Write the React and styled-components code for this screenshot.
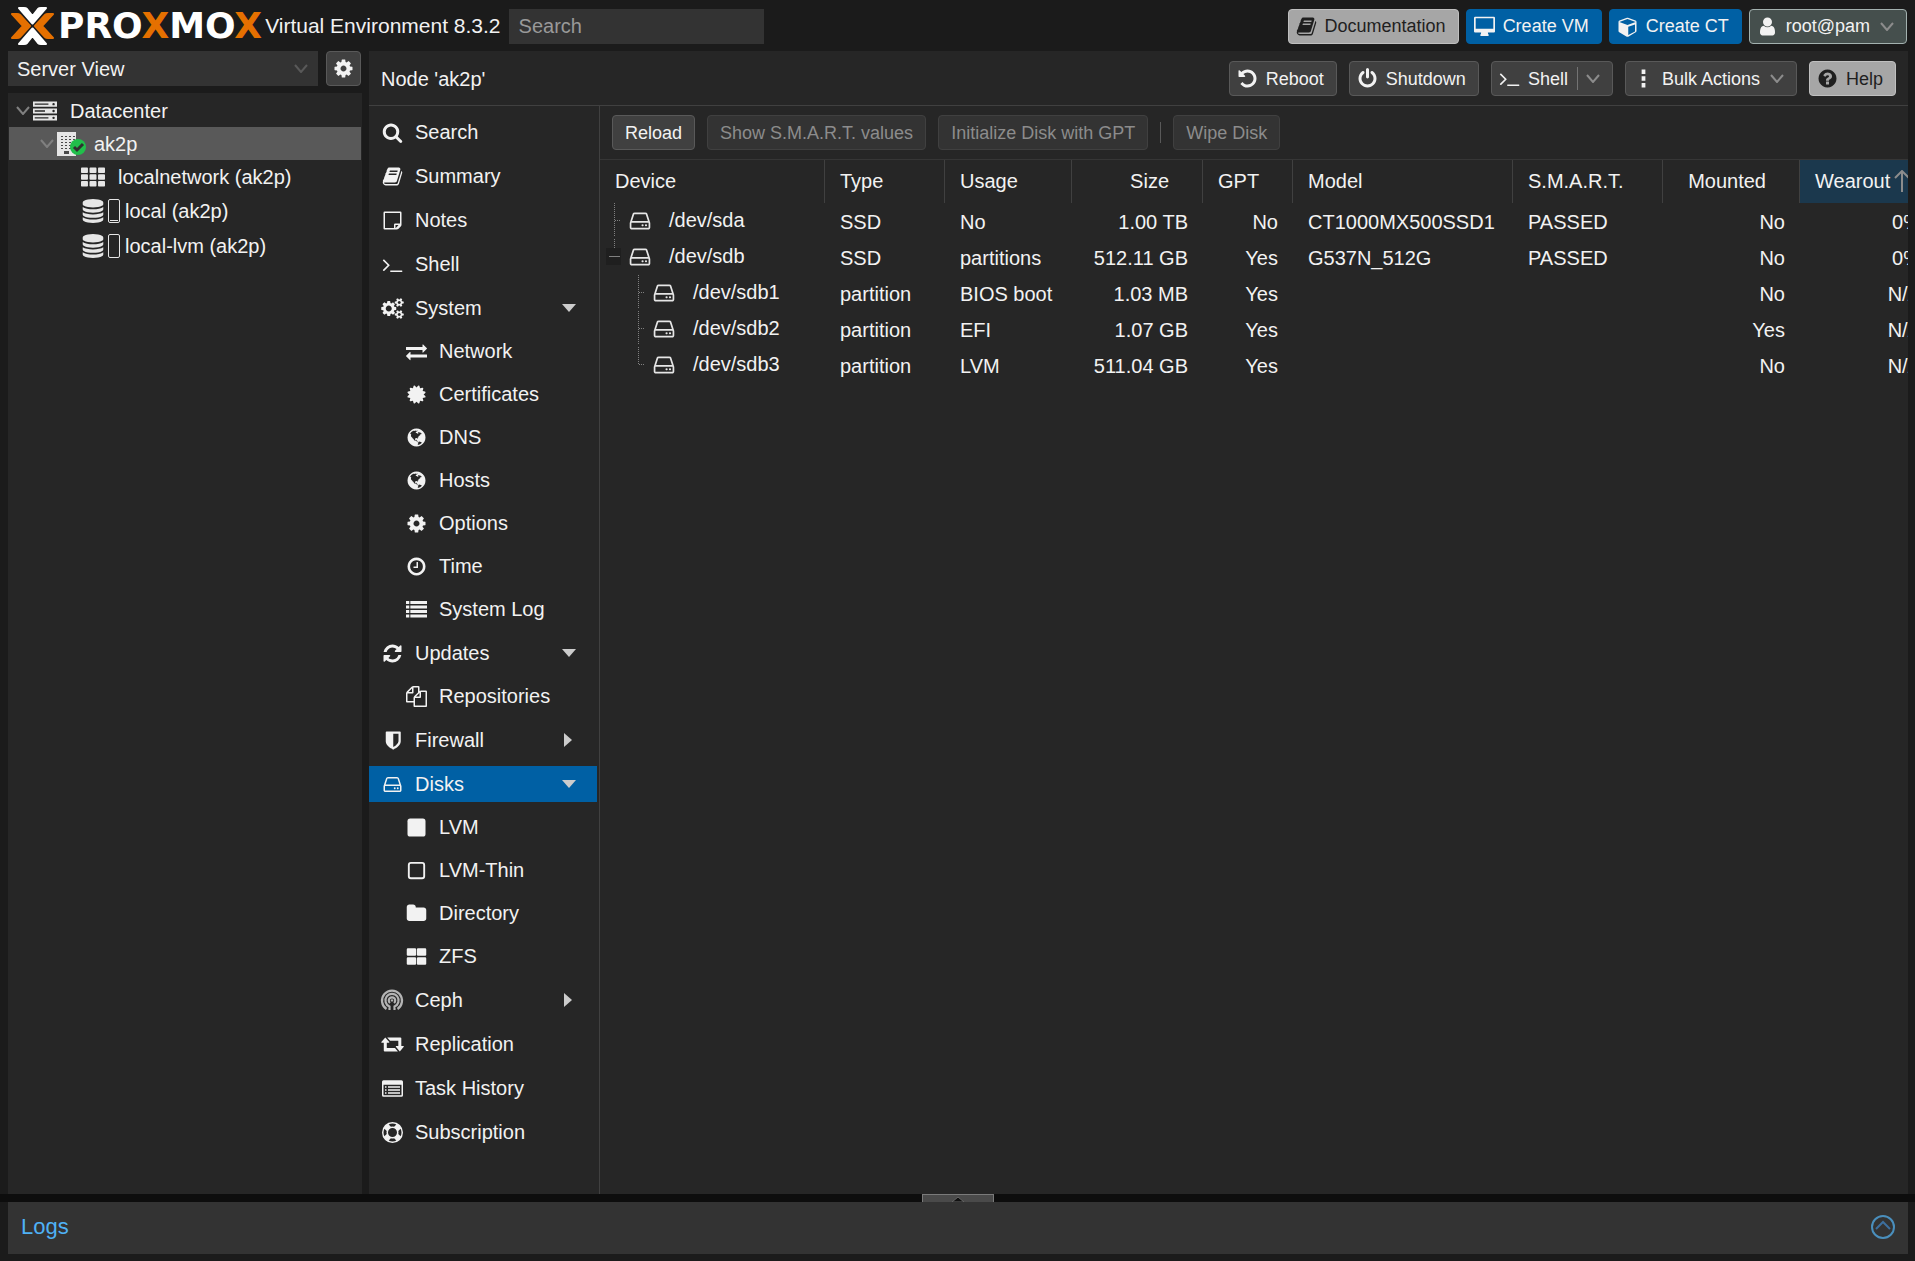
import React, { useState } from "react";
import styled, { createGlobalStyle } from "styled-components";

const GlobalStyle = createGlobalStyle`
  :root {
    --page: #1b1b1b;
    --panel: #262626;
    --field: #333333;
    --line: #404040;
    --text: #f2f2f2;
    --primary: #0060a4;
  }
  * {
    box-sizing: border-box;
  }
  body {
    margin: 0;
    background: var(--page);
    color: var(--text);
    font-family: "Liberation Sans", Arial, sans-serif;
    font-size: 20px;
    line-height: 24px;
  }
  button, input, select {
    font-family: inherit;
  }
`;

/* ---------- icons ---------- */

const paths = {
  search: "M1216 832q0-185-131.5-316.5t-316.5-131.5-316.5 131.5-131.5 316.5 131.5 316.5 316.5 131.5 316.5-131.5 131.5-316.5zm512 832q0 52-38 90t-90 38q-54 0-90-38l-343-342q-179 124-399 124-143 0-273.5-55.5t-225-150-150-225-55.5-273.5 55.5-273.5 150-225 225-150 273.5-55.5 273.5 55.5 225 150 150 225 55.5 273.5q0 220-124 399l343 343q37 37 37 90z",
  book: "M1703 478q40 57 18 129l-275 906q-19 64-76.5 107.5t-122.5 43.5h-923q-77 0-148.5-53.5t-99.5-131.5q-24-67-2-127 0-4 3-27t4-37q1-8-3-21.5t-3-19.5q2-11 8-21t16.5-23.5 16.5-23.5q23-38 45-91.5t30-91.5q3-10 .5-30t-.5-28q3-11 17-28t17-23q21-36 42-92t25-90q1-9-2.5-32t.5-28q4-13 22-30.5t22-22.5q19-26 42.5-84.5t27.5-96.5q1-8-3-25.5t-2-26.5q2-8 9-18t18-23 17-21q8-12 16.5-30.5t15-35 16-36 19.5-32 26.5-23.5 36-11.5 47.5 5.5l-1 3q38-9 51-9h761q74 0 114 56t18 130l-274 906q-36 119-71.5 153.5t-128.5 34.5h-869q-27 0-38 15-11 16-1 43 24 70 144 70h923q29 0 56-15.5t35-41.5l300-987q7-22 5-57 38 15 59 43zm-1064 2q-4 13 2 22.5t20 9.5h608q13 0 25.5-9.5t16.5-22.5l21-64q4-13-2-22.5t-20-9.5h-608q-13 0-25.5 9.5t-16.5 22.5zm-83 256q-4 13 2 22.5t20 9.5h608q13 0 25.5-9.5t16.5-22.5l21-64q4-13-2-22.5t-20-9.5h-608q-13 0-25.5 9.5t-16.5 22.5z",
  note: "M224 128h1344q96 0 96 96v1024q0 90-68 164l-184 184q-74 68-164 68h-1024q-96 0-96-96v-1344q0-96 96-96zM256 256v1280h768v-288q0-96 96-96h416v-896zM1152 1280v248q29-10 41-22l185-185q12-12 22-41z",
  terminal: "M649 983l-466 466q-10 10-23 10t-23-10l-50-50q-10-10-10-23t10-23l393-393-393-393q-10-10-10-23t10-23l50-50q10-10 23-10t23 10l466 466q10 10 10 23t-10 23zm1079 457v64q0 14-9 23t-23 9h-960q-14 0-23-9t-9-23v-64q0-14 9-23t23-9h960q14 0 23 9t9 23z",
  cogs: "M832 896q0-106-75-181t-181-75-181 75-75 181 75 181 181 75 181-75 75-181zm768 512q0-52-38-90t-90-38-90 38-38 90q0 53 37.5 90.5t90.5 37.5 90.5-37.5 37.5-90.5zm0-1024q0-52-38-90t-90-38-90 38-38 90q0 53 37.5 90.5t90.5 37.5 90.5-37.5 37.5-90.5zm-384 421v185q0 10-7 19.5t-16 10.5l-155 24q-11 35-32 76 34 48 90 115 7 11 7 20 0 12-7 19-23 30-82.5 89.5t-78.5 59.5q-11 0-21-7l-115-90q-37 19-77 31-11 108-23 155-7 24-30 24h-186q-11 0-20-7.5t-10-17.5l-23-153q-34-10-75-31l-118 89q-7 7-20 7-11 0-21-8-144-133-144-160 0-9 7-19 10-14 41-53t47-61q-23-44-35-82l-152-24q-10-1-17-9.5t-7-19.5v-185q0-10 7-19.5t16-10.5l155-24q11-35 32-76-34-48-90-115-7-11-7-20 0-12 7-20 22-30 82-89t79-59q11 0 21 7l115 90q34-18 77-32 11-108 23-154 7-24 30-24h186q11 0 20 7.5t10 17.5l23 153q34 10 75 31l118-89q8-7 20-7 11 0 21 8 144 133 144 160 0 8-7 19-12 16-42 54t-45 60q23 48 34 82l152 23q10 2 17 10.5t7 19.5zm640 533v140q0 16-149 31-12 27-30 52 51 113 51 138 0 4-4 7-122 71-124 71-8 0-46-47t-52-68q-20 2-30 2t-30-2q-14 21-52 68t-46 47q-2 0-124-71-4-3-4-7 0-25 51-138-18-25-30-52-149-15-149-31v-140q0-16 149-31 13-29 30-52-51-113-51-138 0-4 4-7 4-2 35-20t59-34 30-16q8 0 46 46.5t52 67.5q20-2 30-2t30 2q51-71 92-112l6-2q4 0 124 70 4 3 4 7 0 25-51 138 17 23 30 52 149 15 149 31zm0-1024v140q0 16-149 31-12 27-30 52 51 113 51 138 0 4-4 7-122 71-124 71-8 0-46-47t-52-68q-20 2-30 2t-30-2q-14 21-52 68t-46 47q-2 0-124-71-4-3-4-7 0-25 51-138-18-25-30-52-149-15-149-31v-140q0-16 149-31 13-29 30-52-51-113-51-138 0-4 4-7 4-2 35-20t59-34 30-16q8 0 46 46.5t52 67.5q20-2 30-2t30 2q51-71 92-112l6-2q4 0 124 70 4 3 4 7 0 25-51 138 17 23 30 52 149 15 149 31z",
  cog: "M1152 896q0-106-75-181t-181-75-181 75-75 181 75 181 181 75 181-75 75-181zm512-109v222q0 12-8 23t-20 13l-185 28q-19 54-39 91 35 50 107 138 10 12 10 25t-9 23q-27 37-99 108t-94 71q-12 0-26-9l-138-108q-44 23-91 38-16 136-29 186-7 28-36 28h-222q-14 0-24.5-8.5t-11.5-21.5l-28-184q-49-16-90-37l-141 107q-10 9-25 9-14 0-25-11-126-114-165-168-7-10-7-23 0-12 8-23 15-21 51-66.5t54-70.5q-27-50-41-99l-183-27q-13-2-21-12.5t-8-23.5v-222q0-12 8-23t19-13l186-28q14-46 39-92-40-57-107-138-10-12-10-24 0-10 9-23 26-36 98.5-107.5t94.5-71.5q13 0 26 10l138 107q44-23 91-38 16-136 29-186 7-28 36-28h222q14 0 24.5 8.5t11.5 21.5l28 184q49 16 90 37l142-107q9-9 24-9 13 0 25 10 129 119 165 170 7 8 7 22 0 12-8 23-15 21-51 66.5t-54 70.5q26 50 41 98l183 28q13 2 21 12.5t8 23.5z",
  exchange: "M1792 1184v192q0 13-9.5 22.5t-22.5 9.5h-1376v192q0 13-9.5 22.5t-22.5 9.5q-12 0-24-10l-319-320q-9-9-9-22 0-14 9-23l320-320q9-9 23-9 13 0 22.5 9.5t9.5 22.5v192h1376q13 0 22.5 9.5t9.5 22.5zm0-544q0 14-9 23l-320 320q-9 9-23 9-13 0-22.5-9.5t-9.5-22.5v-192h-1376q-13 0-22.5-9.5t-9.5-22.5v-192q0-13 9.5-22.5t22.5-9.5h1376v-192q0-14 9-23t23-9q12 0 24 10l319 319q9 9 9 23z",
  certificate: "M1504 896l138 135q30 28 20 70-12 41-52 51l-188 48 53 186q12 41-19 70-29 31-70 19l-186-53-48 188q-10 40-51 52-12 2-19 2-31 0-51-22l-135-138-135 138q-28 30-70 20-41-11-51-52l-48-188-186 53q-41 12-70-19-31-29-19-70l53-186-188-48q-40-10-52-51-10-42 20-70l138-135-138-135q-30-28-20-70 12-41 52-51l188-48-53-186q-12-41 19-70 29-31 70-19l186 53 48-188q10-41 51-51 41-12 70 19l135 139 135-139q29-30 70-19 41 10 51 51l48 188 186-53q41-12 70 19 31 29 19 70l-53 186 188 48q40 10 52 51 10 42-20 70z",
  globe: "M896 128q209 0 385.5 103t279.5 279.5 103 385.5-103 385.5-279.5 279.5-385.5 103-385.5-103-279.5-279.5-103-385.5 103-385.5 279.5-279.5 385.5-103zm274 521q-2 1-9.5 9.5t-13.5 9.5q2 0 4.5-5t5-11 3.5-7q6-7 22-15 14-6 52-12 34-8 51 11-2-2 9.5-13t14.5-12q3-2 15-4.5t15-7.5l2-22q-12 1-17.5-7t-6.5-21q0 2-6 8 0-7-4.5-8t-11.5 1-9 1q-10-3-15-7.5t-8-16.5-4-15q-2-5-9.5-11t-9.5-10q-1-2-2.5-5.5t-3-6.5-4-5.5-5.5-2.5-7 5-7.5 10-4.5 5q-3-2-6-1.5t-4.5 1-4.5 3-5 3.5q-3 2-8.5 3t-8.5 2q15-5-1-11-10-4-16-3 9-4 7.5-12t-8.5-14h5q-1-4-8.5-8.5t-17.5-8.5-13-6q-8-5-34-9.5t-33-.5q-5 6-4.5 10.5t4 14 3.5 12.5q1 6-5.5 13t-6.5 12q0 7 14 15.500t10 21.500q-3 8-16 16t-16 12q-5 8-1.5 18.5t10.5 16.5q2 2 1.5 4t-3.5 4.5-5.5 4-6.5 3.5l-3 2q-11 5-20.5-6t-13.5-26q-7-25-16-30-23-8-29 1-5-13-41-26-25-9-58-4 6-1 0-15-7-15-19-12 3-6 4-17.5t1-13.5q3-13 12-23 1-1 7-8.5t9.5-13.5.5-6q35 4 50-11 5-5 11.5-17t10.5-17q9-6 14-5.5t14.5 5.5 14.5 5q14 1 15.5-11t-7.5-20q12 1 3-17-4-7-8-9-12-4-27 5-8 4 2 8-1-1-9.5 10.5t-16.5 17.5-16-5q-1-1-5.5-13.5t-9.5-13.5q-8 0-16 15 3-8-11-15t-24-8q19-12-8-27-7-4-20.5-5t-19.5 4q-5 7-5.5 11.5t5 8 10.5 5.5 11.5 4 8.5 3q14 10 8 14-2 1-8.5 3.5t-11.5 4.5-6 4q-3 4 0 14t-2 14q-5-5-9-17.5t-7-16.5q7 9-25 6l-10-1q-4 0-16 2t-20.5 1-13.5-8q-4-8 0-20 1-4 4-2-4-3-11-9.5t-10-8.5q-46 15-94 41 6 1 12-1 5-2 13-6.5t10-5.5q34-14 42-7l5-5q14 16 20 25-7-4-30-1-20 6-22 12 7 12 5 18-4-3-11.5-10t-14.5-11-15-5q-16 0-22 1-146 80-235 222 7 7 12 8 4 1 5 9t2.5 11 11.5-3q9 8 3 19 1-1 44 27 19 17 21 21 3 11-10 18-1-2-9-9t-9-4q-3 5 .5 18.5t10.5 12.5q-7 0-9.5 16t-2.5 35.5-1 23.5l2 1q-3 12 5.5 34.5t21.5 19.5q-13 3 20 43 6 8 8 9 3 2 12 7.5t15 10 10 10.5q4 5 10 22.5t14 23.5q-2 6 9.5 20t10.5 23q-1 0-2.5 1t-2.5 1q3 7 15.5 14t15.5 13q1 3 2 10t3 11 8 2q2-20-24-62-15-25-17-29-3-5-5.5-15.5t-4.5-14.5q2 0 6 1.5t8.5 3.5 7.5 4 2 3q-3 7 2 17.5t12 18.5 17 19 12 13q6 6 14 19.5t0 13.5q9 0 20 10.5t17 19.5q5 8 8 26t5 24q2 7 8.5 13.5t12.5 9.5l16 8 13 7q5 2 18.5 10.5t21.5 11.5q10 4 16 4t14.5-2.5 13.5-3.5q15-2 29 15t21 21q36 19 55 11-2 1 .5 7.5t8 15.5 9 14.5 5.5 8.5q5 6 18 15t18 15q6-4 7-9-3 8 7 20t18 10q14-3 14-32-31 15-49-18 0-1-2.5-5.5t-4-8.5-2.5-8.5 0-7.5 5-3q9 0 10-3.5t-2-12.5-4-13q-1-8-11-20t-12-15q-5 9-16 8t-16-9q0 1-1.5 5.5t-1.5 6.5q-13 0-15-1 1-3 2.5-17.5t3.5-22.5q1-4 5.5-12t7.5-14.5 4-12.5-4.5-9.5-17.5-2.5q-19 1-26 20-1 3-3 10.5t-5 11.5-9 7q-7 3-24 2t-24-5q-13-8-22.5-29t-9.5-37q0-10 2.5-26.5t3-25-5.5-24.5q3-2 9-9.5t10-10.5q2-1 4.5-1.5t4.5 0 4-1.5 3-6q-1-1-4-3-3-3-4-3 7 3 28.5-1.5t27.5 1.5q15 11 22-2 0-1-2.5-9.5t-.5-13.5q5 27 29 9 3 3 15.5 5t17.5 5q3 2 7 5.5t5.5 4.5 5-.5 8.5-6.5q10 14 12 24 11 40 19 44 7 3 11 2t4.5-9.5 0-14-1.5-12.5l-1-8v-18l-1-8q-15-3-18.5-12t1.5-18.5 15-18.5q1-1 8-3.5t15.5-6.5 12.5-8q21-19 15-35 7 0 11-9-1 0-5-3t-7.5-5-4.5-2q9-5 2-16 5-3 7.5-11t7.5-10q9 12 21 2 8-8 1-16 5-7 20.5-10.5t18.5-9.5q7 2 8-2t1-12 3-12q4-5 15-9t13-5l17-11q3-4 0-4 18 2 31-11 10-11-6-20 3-6-3-9.5t-15-5.5q3-1 11.5-.5t10.5-1.5q15-10-7-16-17-5-43 12zm-163 877q206-36 351-189-3-3-12.5-4.5t-12.5-3.5q-18-7-24-8 1-7-2.5-13t-8-9-12.5-8-11-7q-2-2-7-6t-7-5.5-7.5-4.5-8.5-2-10 1l-3 1q-3 1-5.5 2.5t-5.5 3-4 3 0 2.5q-21-17-36-22-5-1-11-5.5t-10.5-7-10-1.5-11.5 7q-5 5-6 15t-2 13q-7-5 0-17.5t2-18.5q-3-6-10.5-4.5t-12 4.5-11.5 8.5-9 6.5-8.5 5.5-8.5 7.5q-3 4-6 12t-5 11q-2-4-11.5-6.5t-9.5-5.5q2 10 4 35t5 38q7 31-12 48-27 25-29 40-4 22 12 26 0 7-8 20.5t-7 21.5q0 6 2 16z",
  clock: "M1024 544v448q0 14-9 23t-23 9h-320q-14 0-23-9t-9-23v-64q0-14 9-23t23-9h224v-352q0-14 9-23t23-9h64q14 0 23 9t9 23zm416 352q0-148-73-273t-198-198-273-73-273 73-198 198-73 273 73 273 198 198 273 73 273-73 198-198 73-273zm224 0q0 209-103 385.5t-279.5 279.5-385.5 103-385.5-103-279.5-279.5-103-385.5 103-385.5 279.5-279.5 385.5-103 385.5 103 279.5 279.5 103 385.5z",
  list: "M0 160h280v256h-280zM370 160h1422v256h-1422zM0 544h280v256h-280zM370 544h1422v256h-1422zM0 928h280v256h-280zM370 928h1422v256h-1422zM0 1312h280v256h-280zM370 1312h1422v256h-1422z",
  refresh: "M1639 1056q0 5-1 7-64 268-268 434.5t-478 166.5q-146 0-282.5-55t-243.5-157l-129 129q-19 19-45 19t-45-19-19-45v-448q0-26 19-45t45-19h448q26 0 45 19t19 45-19 45l-137 137q71 66 161 102t187 36q134 0 250-65t186-179q11-17 53-117 8-23 30-23h192q13 0 22.5 9.5t9.5 22.5zm25-800v448q0 26-19 45t-45 19h-448q-26 0-45-19t-19-45 19-45l138-138q-148-137-349-137-134 0-250 65t-186 179q-11 17-53 117-8 23-30 23h-199q-13 0-22.5-9.5t-9.5-22.5v-7q65-268 270-434.5t480-166.5q146 0 284 55.5t245 156.5l130-129q19-19 45-19t45 19 19 45z",
  files: "M1696 384q40 0 68 28t28 68v1216q0 40-28 68t-68 28h-960q-40 0-68-28t-28-68v-288h-544q-40 0-68-28t-28-68v-672q0-40 20-88t48-76l408-408q28-28 76-48t88-20h416q40 0 68 28t28 68v328q68-40 128-40h416zm-544 213l-299 299h299v-299zm-640-384l-299 299h299v-299zm196 647l316-316v-416h-384v416q0 40-28 68t-68 28h-416v640h512v-256q0-40 20-88t48-76zm956 804v-1152h-384v416q0 40-28 68t-68 28h-416v640h896z",
  shield: "M1408 960v-640h-448v1137q119-63 213-137 235-184 235-360zm192-768v768q0 86-33.5 170.5t-83 150-118 127.5-126.5 103-121 77.5-89.5 49.5-42.5 20q-12 6-26 6t-26-6q-16-7-42.5-20t-89.5-49.5-121-77.5-126.5-103-118-127.5-83-150-33.5-170.5v-768q0-26 19-45t45-19h1152q26 0 45 19t19 45z",
  hdd: "M1168 1216q0 33-23.5 56.5t-56.5 23.5-56.5-23.5-23.5-56.5 23.5-56.5 56.5-23.5 56.5 23.5 23.5 56.5zm256 0q0 33-23.5 56.5t-56.5 23.5-56.5-23.5-23.5-56.5 23.5-56.5 56.5-23.5 56.5 23.5 23.5 56.5zm112 160v-320q0-13-9.5-22.5t-22.5-9.5h-1216q-13 0-22.5 9.5t-9.5 22.5v320q0 13 9.5 22.5t22.5 9.5h1216q13 0 22.5-9.5t9.5-22.5zm-1230-480h1180l-157-482q-4-13-16-21.5t-26-8.5h-782q-14 0-26 8.5t-16 21.5zm1358 160v320q0 66-47 113t-113 47h-1216q-66 0-113-47t-47-113v-320q0-25 16-75l197-606q17-53 63-86t101-33h782q55 0 101 33t63 86l197 606q16 50 16 75z",
  square: "M352 128h1088q224 0 224 224v1088q0 224-224 224h-1088q-224 0-224-224v-1088q0-224 224-224z",
  squareOpen: "M416 160h960q256 0 256 256v960q0 256-256 256h-960q-256 0-256-256v-960q0-256 256-256zM416 320q-96 0-96 96v960q0 96 96 96h960q96 0 96-96v-960q0-96-96-96z",
  folder: "M1728 608v704q0 92-66 158t-158 66h-1216q-92 0-158-66t-66-158v-960q0-92 66-158t158-66h320q92 0 158 66t66 158v32h672q92 0 158 66t66 158z",
  thLarge: "M160 192h608q96 0 96 96v448q0 96-96 96h-608q-96 0-96-96v-448q0-96 96-96zM1024 192h608q96 0 96 96v448q0 96-96 96h-608q-96 0-96-96v-448q0-96 96-96zM160 960h608q96 0 96 96v448q0 96-96 96h-608q-96 0-96-96v-448q0-96 96-96zM1024 960h608q96 0 96 96v448q0 96-96 96h-608q-96 0-96-96v-448q0-96 96-96z",
  th: "M60 192h400q60 0 60 60v280q0 60-60 60h-400q-60 0-60-60v-280q0-60 60-60zM696 192h400q60 0 60 60v280q0 60-60 60h-400q-60 0-60-60v-280q0-60 60-60zM1332 192h400q60 0 60 60v280q0 60-60 60h-400q-60 0-60-60v-280q0-60 60-60zM60 696h400q60 0 60 60v280q0 60-60 60h-400q-60 0-60-60v-280q0-60 60-60zM696 696h400q60 0 60 60v280q0 60-60 60h-400q-60 0-60-60v-280q0-60 60-60zM1332 696h400q60 0 60 60v280q0 60-60 60h-400q-60 0-60-60v-280q0-60 60-60zM60 1200h400q60 0 60 60v280q0 60-60 60h-400q-60 0-60-60v-280q0-60 60-60zM696 1200h400q60 0 60 60v280q0 60-60 60h-400q-60 0-60-60v-280q0-60 60-60zM1332 1200h400q60 0 60 60v280q0 60-60 60h-400q-60 0-60-60v-280q0-60 60-60z",
  retweet: "M280 290l340 400q20 60-40 60h-172v448h700l250 290h-1126q-80 0-80-80v-658h-172q-60 0-40-60zM1520 1490l-340-400q-20-60 40-60h172v-448h-700l-250-290h1126q80 0 80 80v658h172q60 0 40 60z",
  listAlt: "M130 192h1532q130 0 130 130v1148q0 130-130 130h-1532q-130 0-130-130v-1148q0-130 130-130zM128 576v864q0 32 32 32h1472q32 0 32-32v-864zM256 704h128v128h-128zM512 704h1024v128h-1024zM256 960h128v128h-128zM512 960h1024v128h-1024zM256 1216h128v128h-128zM512 1216h1024v128h-1024z",
  lifeRing: "M896 0a896 896 0 1 1 0 1792a896 896 0 1 1 0-1792zM896 512a384 384 0 1 0 0 768a384 384 0 1 0 0-768zM566 208l194 194q136-36 272 0l194-194q-330-160-660 0zM566 1584l194-194q136 36 272 0l194 194q-330 160-660 0zM208 566l194 194q-36 136 0 272l-194 194q-160-330 0-660zM1584 566l-194 194q36 136 0 272l194 194q160-330 0-660z",
  database: "M896 768q237 0 443-43t325-127v170q0 69-103 128t-280 93.5-385 34.5-385-34.5-280-93.5-103-128v-170q119 84 325 127t443 43zm0 768q237 0 443-43t325-127v170q0 69-103 128t-280 93.5-385 34.5-385-34.5-280-93.5-103-128v-170q119 84 325 127t443 43zm0-384q237 0 443-43t325-127v170q0 69-103 128t-280 93.5-385 34.5-385-34.5-280-93.5-103-128v-170q119 84 325 127t443 43zm0-1152q208 0 385 34.5t280 93.5 103 128v128q0 69-103 128t-280 93.5-385 34.5-385-34.5-280-93.5-103-128v-128q0-69 103-128t280-93.5 385-34.5z",
  server: "M0 192h1792v384h-1792zM128 336v96h1024v-96zM1536 294a90 90 0 1 0 0 180a90 90 0 1 0 0-180zM0 704h1792v384h-1792zM128 848v96h768v-96zM1536 806a90 90 0 1 0 0 180a90 90 0 1 0 0-180zM0 1216h1792v384h-1792zM128 1360v96h1024v-96zM1536 1318a90 90 0 1 0 0 180a90 90 0 1 0 0-180z",
  undo: "M1664 896q0 156-61 298t-164 245-245 164-298 61q-172 0-327-72.5t-264-204.5q-7-10-6.5-22.5t8.5-20.5l137-138q10-9 25-9 16 2 23 12 73 95 179 147t225 52q104 0 198.5-40.5t163.5-109.5 109.5-163.5 40.5-198.5-40.5-198.5-109.5-163.5-163.5-109.5-198.5-40.5q-98 0-188 35.5t-160 101.5l137 138q31 30 14 69-17 40-59 40h-448q-26 0-45-19t-19-45v-448q0-42 40-59 39-17 69 14l130 129q107-101 244.5-156.5t284.5-55.5q156 0 298 61t245 164 164 245 61 298z",
  power: "M1664 896q0 156-61 298t-164 245-245 164-298 61-298-61-245-164-164-245-61-298q0-182 80.5-343t226.5-270q43-32 95.5-25t83.5 50q32 42 24.5 94.5t-49.5 84.5q-98 74-151.5 181t-53.5 228q0 104 40.5 198.5t109.5 163.5 163.5 109.5 198.5 40.5 198.5-40.5 163.5-109.5 109.5-163.5 40.5-198.5q0-121-53.5-228t-151.5-181q-42-32-49.5-84.5t24.5-94.5q31-43 84-50t95 25q146 109 226.5 270t80.5 343zm-640-768v640q0 52-38 90t-90 38-90-38-38-90v-640q0-52 38-90t90-38 90 38 38 90z",
  help: "M1024 1376v-192q0-14-9-23t-23-9h-192q-14 0-23 9t-9 23v192q0 14 9 23t23 9h192q14 0 23-9t9-23zm256-672q0-88-55.5-163t-138.5-116-170-41q-243 0-371 213-15 24 8 42l132 100q7 6 19 6 16 0 25-12 53-68 86-92 34-24 86-24 48 0 85.5 26t37.5 59q0 38-20 61t-68 45q-63 28-115.5 86.5t-52.5 125.5v36q0 14 9 23t23 9h192q14 0 23-9t9-23q0-19 21.5-49.5t54.5-49.5q32-18 49-28.5t46-35 44.5-48 28-60.5 12.5-81zm384 192q0 209-103 385.5t-279.5 279.5-385.5 103-385.5-103-279.5-279.5-103-385.5 103-385.5 279.5-279.5 385.5-103 385.5 103 279.5 279.5 103 385.5z",
  cube: "M960 1629l576-314v-600l-576 210zM896 764l698-254-698-254-698 254zM1664 512v768q0 72-67 112l-640 370q-61 30-122 0l-640-370q-67-40-67-112v-768q0-84 84-120l640-240q44-16 88 0l640 240q84 36 84 120z",
  desktop: "M96 64h1600q96 0 96 96v1152q0 96-96 96h-512q0 96 64 192 32 64-32 96h-640q-64-32-32-96 64-96 64-192h-512q-96 0-96-96v-1152q0-96 96-96zM144 192v896h1504v-896z",
  user: "M1536 1399q0 109-62.5 187t-150.5 78h-854q-88 0-150.5-78t-62.5-187q0-85 8.5-160.5t31.5-152 58.5-131 94-89 134.5-34.5q131 128 313 128t313-128q76 0 134.5 34.5t94 89 58.5 131 31.5 152 8.5 160.5zm-256-887q0 159-112.5 271.5t-271.5 112.5-271.5-112.5-112.5-271.5 112.5-271.5 271.5-112.5 271.5 112.5 112.5 271.5z",
  dots: "M736 128h320v384h-320zM736 704h320v384h-320zM736 1280h320v384h-320z",
};

const IconSvg = styled.svg`
  width: ${(p) => p.$size}px;
  height: ${(p) => p.$size}px;
  flex: none;
  display: block;
  overflow: visible;
`;

function Icon({ name, size = 21 }) {
  return (
    <IconSvg $size={size} viewBox="0 0 1792 1792" aria-hidden="true">
      <path d={paths[name]} fill="currentColor" fillRule="evenodd" />
    </IconSvg>
  );
}

function CephIcon() {
  return (
    <IconSvg $size={22} viewBox="0 0 22 22" fill="none" stroke="#b4b4b4" strokeWidth="2.200" aria-hidden="true">
      <path d="M5.5 20A10 10 0 1 1 16.5 20" />
      <path d="M8.5 21V17.5A6.6 6.6 0 1 1 13.5 17.5V21" />
      <path d="M9 14A3.2 3.2 0 1 1 13 14" />
      <circle cx="11" cy="11.4" r="1.2" fill="#b4b4b4" stroke="none" />
    </IconSvg>
  );
}

function NodeIcon() {
  const dots = [];
  for (let y = 0; y < 5; y++) {
    for (let x = 0; x < 4; x++) {
      dots.push(<rect key={`${x}-${y}`} x={4 + x * 4} y={4 + y * 3} width="2" height="1" fill="#4a4a4a" />);
    }
  }
  return (
    <IconSvg $size={24} viewBox="0 0 24 24" aria-hidden="true">
      <path d="M0 0h19v24h-19z" fill="#e6e6e6" />
      {dots}
      <path d="M7 19h5v3h-5z" fill="#4a4a4a" />
      <circle cx="21" cy="15" r="8" fill="#21bf4b" />
      <path d="M17 15l3 3 6-6" fill="none" stroke="#303030" strokeWidth="3" />
    </IconSvg>
  );
}

const ChevronSvg = styled.svg`
  width: 14px;
  height: 9px;
  flex: none;
  color: ${(p) => p.$color || "#8c8c8c"};
`;

function Chevron({ color }) {
  return (
    <ChevronSvg $color={color} viewBox="0 0 14 9" fill="none" aria-hidden="true">
      <path d="M1 1L7 8L13 1" stroke="currentColor" strokeWidth="2" />
    </ChevronSvg>
  );
}

const LogoMark = styled.svg`
  width: 43px;
  height: 38px;
  flex: none;
`;

function Logo() {
  return (
    <LogoMark viewBox="0 0 43 38" strokeLinejoin="round" strokeWidth="2" aria-hidden="true">
      <path d="M1 7H6Q8 7 9 8L19 19L9 30Q8 31 6 31H1L12 19Z" fill="#e57000" stroke="#e57000" />
      <path d="M42 7H37Q35 7 34 8L24 19L34 30Q35 31 37 31H42L31 19Z" fill="#e57000" stroke="#e57000" />
      <path d="M8 1H13Q15 1 16 2L21.500 9L27 2Q28 1 30 1H35L21.500 16.500Z" fill="#fff" stroke="#fff" />
      <path d="M8 37H13Q15 37 16 36L21.500 29L27 36Q28 37 30 37H35L21.500 21.500Z" fill="#fff" stroke="#fff" />
    </LogoMark>
  );
}

/* ---------- shared controls ---------- */

const variants = {
  normal: "background: #404040; border-color: #595959; color: #f2f2f2;",
  light: "background: #a6a6a6; border-color: #bfbfbf; color: #1f1f1f;",
  primary: "background: #0060a4; border-color: #0060a4; color: #f2f2f2;",
  user: "background: #454f4d; border-color: #a3b1af; color: #f2f2f2;",
};

const Button = styled.button`
  height: 35px;
  padding: 0 12px;
  display: flex;
  align-items: center;
  flex: none;
  border: 1px solid;
  border-radius: 4px;
  font-size: 18px;
  line-height: 22px;
  white-space: nowrap;
  ${(p) => variants[p.$variant || "normal"]}
  &:disabled {
    background: #333333;
    border-color: #404040;
    color: #8c8c8c;
  }
`;
const IconButton = styled(Button)`
  padding-left: 6px;
  gap: 6px;
`;
const ButtonIcon = styled.span`
  width: 24px;
  display: flex;
  justify-content: center;
`;
const ButtonArrow = styled.span`
  height: 23px;
  margin-left: ${(p) => (p.$split ? "3px" : "4px")};
  padding-left: ${(p) => (p.$split ? "8px" : "0")};
  border-left: ${(p) => (p.$split ? "1px solid #737373" : "none")};
  display: flex;
  align-items: center;
`;

function ActionButton({ icon, variant, menu, split, children }) {
  return (
    <IconButton type="button" $variant={variant}>
      <ButtonIcon><Icon name={icon} /></ButtonIcon>
      {children}
      {(menu || split) && <ButtonArrow $split={split}><Chevron /></ButtonArrow>}
    </IconButton>
  );
}

/* ---------- page ---------- */

const Page = styled.div`
  min-height: 100vh;
  display: flex;
  flex-direction: column;
`;
const Header = styled.header`
  padding: 7px 8px 6px 11px;
  display: flex;
  align-items: center;
`;
const Brand = styled.a`
  display: flex;
  align-items: center;
  gap: 4px;
  color: #ffffff;
  text-decoration: none;
`;
const BrandName = styled.span`
  font-family: "DejaVu Sans", sans-serif;
  font-size: 36px;
  font-weight: 700;
  line-height: 38px;
  i {
    font-style: normal;
    color: #e57000;
  }
`;
const Product = styled.h1`
  margin: 0 8px 0 3px;
  font-size: 21px;
  font-weight: 400;
  line-height: 24px;
  white-space: nowrap;
`;
const SearchBox = styled.input`
  width: 255px;
  height: 35px;
  padding: 0 10px;
  border: 0;
  background: var(--field);
  color: var(--text);
  font-size: 20px;
  &::placeholder {
    color: #999999;
    opacity: 1;
  }
`;
const HeaderActions = styled.div`
  margin-left: auto;
  display: flex;
  gap: 7px;
`;
const Workspace = styled.div`
  flex: 1;
  padding: 0 7px 0 8px;
  display: flex;
  gap: 7px;
`;

const Sidebar = styled.aside`
  width: 354px;
  flex: none;
  display: flex;
  flex-direction: column;
  gap: 7px;
`;
const ViewBar = styled.div`
  padding-right: 1px;
  display: flex;
  gap: 8px;
`;
const ViewField = styled.div`
  flex: 1;
  padding-right: 10px;
  display: flex;
  align-items: center;
  background: var(--field);
`;
const ViewSelect = styled.select`
  flex: 1;
  height: 35px;
  padding: 0 9px;
  border: 0;
  appearance: none;
  background: transparent;
  color: var(--text);
  font-size: 20px;
`;
const GearButton = styled(Button)`
  width: 35px;
  padding: 0;
  justify-content: center;
`;
const Tree = styled.ul`
  flex: 1;
  margin: 0;
  padding: 1px;
  list-style: none;
  background: var(--panel);
`;
const TreeRow = styled.li`
  height: ${(p) => (p.$storage ? "35px" : "33px")};
  padding-left: ${(p) => 7 + p.$level * 24}px;
  display: flex;
  align-items: center;
  background: ${(p) => (p.$selected ? "#595959" : "transparent")};
  color: #e6e6e6;
`;
const TreeArrow = styled.span`
  width: 17px;
  display: flex;
`;
const TreeLabel = styled.span`
  margin-left: ${(p) => (p.$storage ? "5px" : "13px")};
  color: var(--text);
`;
const UsageBar = styled.span`
  width: 12px;
  height: 24px;
  margin-left: 3px;
  padding: 1px;
  border: 1px solid #e6e6e6;
  border-radius: 2px;
  display: flex;
  align-items: flex-end;
`;
const UsageFill = styled.span`
  width: 100%;
  background: #e6e6e6;
`;

const tree = [
  { level: 0, icon: "server", label: "Datacenter", open: true },
  { level: 1, icon: "node", label: "ak2p", open: true, selected: true },
  { level: 2, icon: "th", label: "localnetwork (ak2p)" },
  { level: 2, icon: "database", label: "local (ak2p)", storage: true, usage: 5 },
  { level: 2, icon: "database", label: "local-lvm (ak2p)", storage: true, usage: 0 },
];

function ServerTree() {
  return (
    <Sidebar>
      <ViewBar>
        <ViewField>
          <ViewSelect aria-label="View">
            <option>Server View</option>
          </ViewSelect>
          <Chevron color="#595959" />
        </ViewField>
        <GearButton type="button" aria-label="Tree settings"><Icon name="cog" /></GearButton>
      </ViewBar>
      <Tree>
        {tree.map((n) => (
          <TreeRow key={n.label} $level={n.level} $selected={n.selected} $storage={n.storage}>
            <TreeArrow>{n.open && <Chevron color="#808080" />}</TreeArrow>
            {n.icon === "node" ? <NodeIcon /> : <Icon name={n.icon} size={24} />}
            {n.storage && (
              <UsageBar>
                <UsageFill style={{ height: `${n.usage}%` }} />
              </UsageBar>
            )}
            <TreeLabel $storage={n.storage}>{n.label}</TreeLabel>
          </TreeRow>
        ))}
      </Tree>
    </Sidebar>
  );
}

const Content = styled.main`
  flex: 1;
  min-width: 0;
  display: flex;
  flex-direction: column;
  background: var(--panel);
`;
const TitleBar = styled.div`
  padding: 10px 12px 9px;
  display: flex;
  align-items: center;
  gap: 12px;
  border-bottom: 1px solid var(--line);
`;
const Title = styled.h2`
  margin: 0 auto 0 0;
  font-size: 20px;
  font-weight: 400;
`;
const Body = styled.div`
  flex: 1;
  display: flex;
`;
const Menu = styled.nav`
  width: 231px;
  flex: none;
  padding: 4px 2px 0 0;
  display: flex;
  flex-direction: column;
  border-right: 1px solid var(--line);
`;
const MenuItem = styled.a`
  height: 36px;
  margin: ${(p) => (p.$sub ? "3px 0 4px" : "4px 0")};
  padding: 0 20px 0 ${(p) => (p.$sub ? "35px" : "11px")};
  display: flex;
  align-items: center;
  gap: 11px;
  background: ${(p) => (p.$active ? "var(--primary)" : "transparent")};
  color: var(--text);
  text-decoration: none;
`;
const MenuIcon = styled.span`
  width: 24px;
  display: flex;
  justify-content: center;
`;
const MenuLabel = styled.span`
  flex: 1;
`;
const ArrowBox = styled.svg`
  width: 16px;
  height: 16px;
  fill: #cccccc;
`;

const menu = [
  { icon: "search", label: "Search" },
  { icon: "book", label: "Summary" },
  { icon: "note", label: "Notes" },
  { icon: "terminal", label: "Shell" },
  { icon: "cogs", label: "System", arrow: "down" },
  { icon: "exchange", label: "Network", sub: true },
  { icon: "certificate", label: "Certificates", sub: true },
  { icon: "globe", label: "DNS", sub: true },
  { icon: "globe", label: "Hosts", sub: true },
  { icon: "cog", label: "Options", sub: true },
  { icon: "clock", label: "Time", sub: true },
  { icon: "list", label: "System Log", sub: true },
  { icon: "refresh", label: "Updates", arrow: "down" },
  { icon: "files", label: "Repositories", sub: true },
  { icon: "shield", label: "Firewall", arrow: "right" },
  { icon: "hdd", label: "Disks", arrow: "down" },
  { icon: "square", label: "LVM", sub: true },
  { icon: "squareOpen", label: "LVM-Thin", sub: true },
  { icon: "folder", label: "Directory", sub: true },
  { icon: "thLarge", label: "ZFS", sub: true },
  { icon: "ceph", label: "Ceph", arrow: "right" },
  { icon: "retweet", label: "Replication" },
  { icon: "listAlt", label: "Task History" },
  { icon: "lifeRing", label: "Subscription" },
];

function NodeMenu() {
  const [active, setActive] = useState("Disks");

  return (
    <Menu>
      {menu.map(({ icon, label, sub, arrow }) => (
        <MenuItem key={label} href="#" $sub={sub} $active={active === label} onClick={() => setActive(label)}>
          <MenuIcon>{icon === "ceph" ? <CephIcon /> : <Icon name={icon} />}</MenuIcon>
          <MenuLabel>{label}</MenuLabel>
          {arrow && (
            <ArrowBox viewBox="0 0 16 16" aria-hidden="true">
              <path d={arrow === "down" ? "M1 4H15L8 12Z" : "M3 1L11 8L3 15Z"} />
            </ArrowBox>
          )}
        </MenuItem>
      ))}
    </Menu>
  );
}

const Disks = styled.section`
  flex: 1;
  min-width: 0;
`;
const Toolbar = styled.div`
  padding: 9px 12px;
  display: flex;
  align-items: center;
  gap: 12px;
  border-bottom: 1px solid #363636;
`;
const Separator = styled.span`
  width: 1px;
  height: 21px;
  background: #595959;
`;
const TableWrap = styled.div`
  overflow: hidden;
`;
const Table = styled.table`
  width: 1336px;
  table-layout: fixed;
  border-collapse: separate;
  border-spacing: 0;
`;
const Th = styled.th`
  height: 43px;
  padding: 0 ${(p) => (p.$right ? "33px" : "15px")} 2px 15px;
  border-right: 1px solid var(--line);
  background: ${(p) => (p.$sorted ? "#1b384d" : "transparent")};
  font-weight: 400;
  text-align: ${(p) => (p.$right ? "right" : "left")};
  white-space: nowrap;
`;
const SortLabel = styled.span`
  display: flex;
  align-items: center;
  gap: 4px;
`;
const SortArrow = styled.svg`
  width: 16px;
  height: 22px;
  flex: none;
`;
const Td = styled.td`
  height: 36px;
  padding: 1px 15px 0;
  text-align: ${(p) => (p.$right ? "right" : "left")};
  white-space: nowrap;
`;
const DeviceTd = styled(Td)`
  padding: 0 0 0 6px;
`;
const Device = styled.div`
  height: 36px;
  padding-left: ${(p) => (p.$child ? "24px" : "0")};
  display: flex;
  align-items: center;
  color: #e6e6e6;
`;
const DeviceName = styled.span`
  height: 26px;
  margin-left: 17px;
  color: var(--text);
`;
const ElbowSvg = styled.svg`
  width: 22px;
  height: 36px;
  flex: none;
`;

function Elbow({ kind }) {
  if (kind === "expanded") {
    return (
      <ElbowSvg viewBox="0 0 22 36" aria-hidden="true">
        <path d="M8.5 0V9" stroke="#808080" strokeDasharray="1 1" />
        <rect x="0" y="9" width="15" height="17" fill="#1f1f1f" />
        <path d="M3 17.5H14" stroke="#808080" />
      </ElbowSvg>
    );
  }
  return (
    <ElbowSvg viewBox="0 0 22 36" stroke="#808080" strokeDasharray="1 1" aria-hidden="true">
      <path d={kind === "end" ? "M8.5 0V18" : "M8.5 0V33"} />
      <path d="M9 17.5H15" />
    </ElbowSvg>
  );
}

const columns = [
  { label: "Device", width: 225 },
  { label: "Type", width: 120 },
  { label: "Usage", width: 127 },
  { label: "Size", width: 131, right: true },
  { label: "GPT", width: 90, right: true },
  { label: "Model", width: 220 },
  { label: "S.M.A.R.T.", width: 150 },
  { label: "Mounted", width: 137, right: true },
  { label: "Wearout", width: 136, sorted: true },
];

const disks = [
  { device: "/dev/sda", kind: "mid", type: "SSD", usage: "No", size: "1.00 TB", gpt: "No", model: "CT1000MX500SSD1", smart: "PASSED", mounted: "No", wearout: "0%" },
  { device: "/dev/sdb", kind: "expanded", type: "SSD", usage: "partitions", size: "512.11 GB", gpt: "Yes", model: "G537N_512G", smart: "PASSED", mounted: "No", wearout: "0%" },
  { device: "/dev/sdb1", kind: "mid", child: true, type: "partition", usage: "BIOS boot", size: "1.03 MB", gpt: "Yes", mounted: "No", wearout: "N/A" },
  { device: "/dev/sdb2", kind: "mid", child: true, type: "partition", usage: "EFI", size: "1.07 GB", gpt: "Yes", mounted: "Yes", wearout: "N/A" },
  { device: "/dev/sdb3", kind: "end", child: true, type: "partition", usage: "LVM", size: "511.04 GB", gpt: "Yes", mounted: "No", wearout: "N/A" },
];

function DiskList() {
  return (
    <Disks>
      <Toolbar>
        <Button type="button">Reload</Button>
        <Button type="button" disabled>Show S.M.A.R.T. values</Button>
        <Button type="button" disabled>Initialize Disk with GPT</Button>
        <Separator />
        <Button type="button" disabled>Wipe Disk</Button>
      </Toolbar>
      <TableWrap>
        <Table>
          <colgroup>
            {columns.map((c) => <col key={c.label} width={c.width} />)}
          </colgroup>
          <thead>
            <tr>
              {columns.map((c) => (
                <Th key={c.label} $right={c.right} $sorted={c.sorted}>
                  {c.sorted ? (
                    <SortLabel>
                      {c.label}
                      <SortArrow viewBox="0 0 16 22" fill="none" stroke="#8c8c8c" strokeWidth="2" aria-hidden="true">
                        <path d="M8 22V1M1 8L8 1L15 8" />
                      </SortArrow>
                    </SortLabel>
                  ) : c.label}
                </Th>
              ))}
            </tr>
          </thead>
          <tbody>
            {disks.map((d) => (
              <tr key={d.device}>
                <DeviceTd>
                  <Device $child={d.child}>
                    <Elbow kind={d.kind} />
                    <Icon name="hdd" size={24} />
                    <DeviceName>{d.device}</DeviceName>
                  </Device>
                </DeviceTd>
                <Td>{d.type}</Td>
                <Td>{d.usage}</Td>
                <Td $right>{d.size}</Td>
                <Td $right>{d.gpt}</Td>
                <Td>{d.model}</Td>
                <Td>{d.smart}</Td>
                <Td $right>{d.mounted}</Td>
                <Td $right>{d.wearout}</Td>
              </tr>
            ))}
          </tbody>
        </Table>
      </TableWrap>
    </Disks>
  );
}

const Splitter = styled.div`
  height: 8px;
  display: flex;
  justify-content: center;
  background: #0d0d0d;
`;
const SplitHandle = styled.button`
  width: 72px;
  height: 8px;
  padding: 0;
  border: 1px solid #7a7a7a;
  border-bottom: 0;
  display: flex;
  justify-content: center;
  align-items: flex-end;
  background: #4a4a4a;
  svg {
    width: 14px;
    height: 6px;
  }
`;
const Logs = styled.footer`
  margin: 0 7px 7px 8px;
  padding: 12px 12px 14px 13px;
  display: flex;
  align-items: center;
  justify-content: space-between;
  background: var(--field);
`;
const LogsTitle = styled.h2`
  margin: 0;
  color: #4fb1f5;
  font-size: 22px;
  font-weight: 400;
  line-height: 26px;
`;
const ExpandButton = styled.button`
  width: 26px;
  height: 26px;
  padding: 0;
  border: 0;
  background: none;
  svg {
    display: block;
  }
`;

export default function App() {
  return (
    <Page>
      <GlobalStyle />
      <Header>
        <Brand href="#" aria-label="Proxmox">
          <Logo />
          <BrandName>PRO<i>X</i>MO<i>X</i></BrandName>
        </Brand>
        <Product>Virtual Environment 8.3.2</Product>
        <SearchBox type="text" placeholder="Search" aria-label="Search" />
        <HeaderActions>
          <ActionButton icon="book" variant="light">Documentation</ActionButton>
          <ActionButton icon="desktop" variant="primary">Create VM</ActionButton>
          <ActionButton icon="cube" variant="primary">Create CT</ActionButton>
          <ActionButton icon="user" variant="user" menu>root@pam</ActionButton>
        </HeaderActions>
      </Header>
      <Workspace>
        <ServerTree />
        <Content>
          <TitleBar>
            <Title>Node 'ak2p'</Title>
            <ActionButton icon="undo">Reboot</ActionButton>
            <ActionButton icon="power">Shutdown</ActionButton>
            <ActionButton icon="terminal" split>Shell</ActionButton>
            <ActionButton icon="dots" menu>Bulk Actions</ActionButton>
            <ActionButton icon="help" variant="light">Help</ActionButton>
          </TitleBar>
          <Body>
            <NodeMenu />
            <DiskList />
          </Body>
        </Content>
      </Workspace>
      <Splitter>
        <SplitHandle type="button" aria-label="Toggle logs">
          <svg viewBox="0 0 14 6" aria-hidden="true">
            <path d="M1 6L7 1L13 6Z" fill="#111111" stroke="#666666" strokeWidth="1" />
          </svg>
        </SplitHandle>
      </Splitter>
      <Logs>
        <LogsTitle>Logs</LogsTitle>
        <ExpandButton type="button" aria-label="Expand logs">
          <svg viewBox="0 0 26 26" fill="none" aria-hidden="true">
            <circle cx="13" cy="13" r="11" stroke="#4a8fbd" strokeWidth="2" />
            <path d="M6 15L13 8L20 15" stroke="#3d6f9e" strokeWidth="2" />
          </svg>
        </ExpandButton>
      </Logs>
    </Page>
  );
}
